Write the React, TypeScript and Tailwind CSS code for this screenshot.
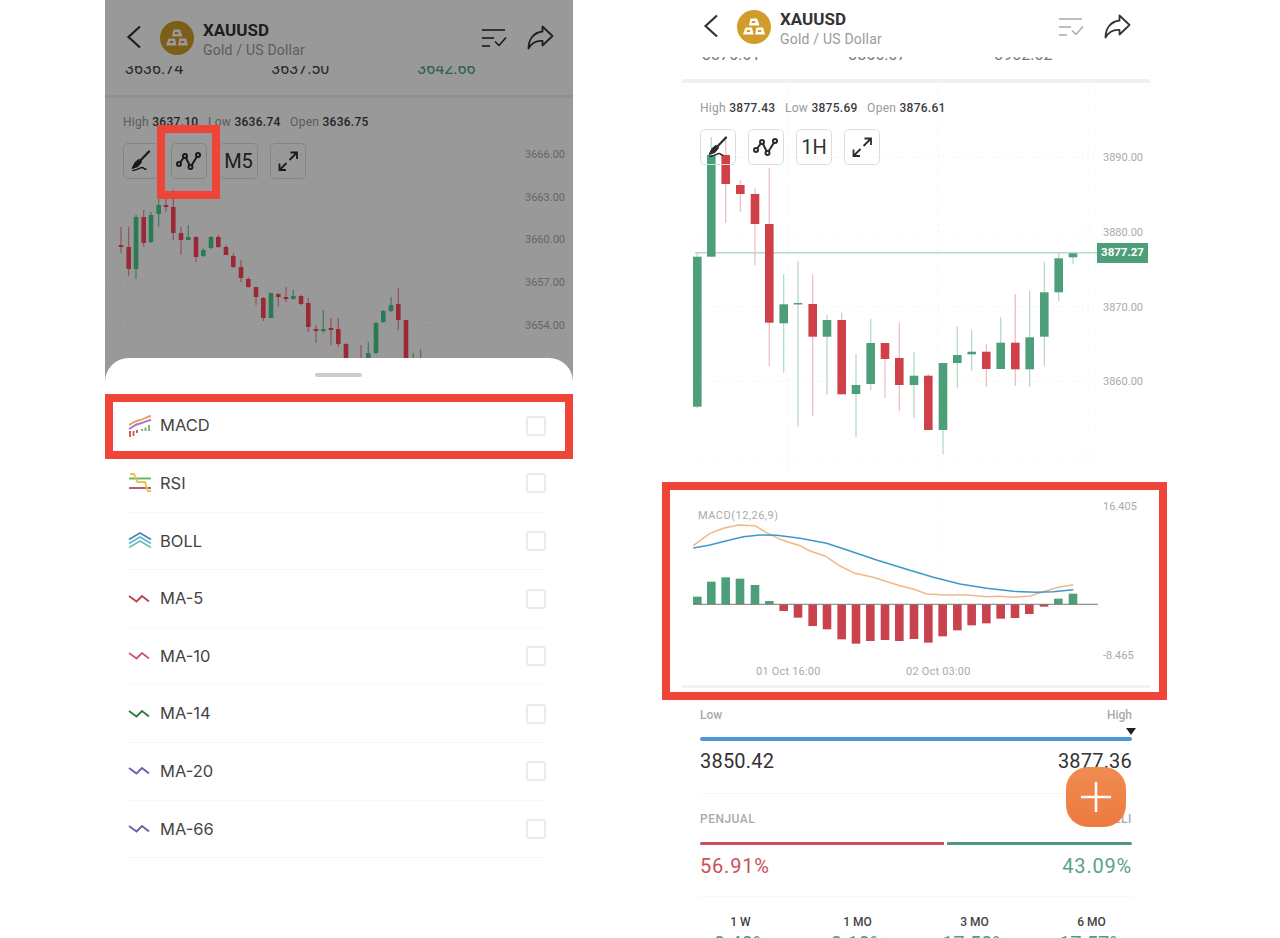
import React from "react";

const din = "font-['Roboto',sans-serif]";

type Candle = [number, number, number, number, number, "g" | "r"];

// x, wick top, wick bottom, body top, body bottom, colour (page coordinates)
const leftCandles: Candle[] = [
  [121, 227, 253, 245, 247, "r"], [128.7, 227, 276, 247, 269, "r"], [136, 215, 279, 217, 269, "g"],
  [143.7, 210, 247, 217, 243, "r"], [151, 212, 243, 215, 242, "g"], [158.7, 198, 227, 205, 214, "g"],
  [166, 198, 212, 205, 207, "r"], [173.3, 190, 240, 207, 233, "r"], [181, 227, 255, 233, 240, "r"],
  [188.3, 225, 240, 237, 240, "g"], [196, 236, 262, 237, 257, "r"], [203.3, 248, 257, 250, 256, "g"],
  [211, 236, 249, 237, 248, "g"], [218.3, 235, 248, 237, 247, "r"], [226, 245, 255, 247, 255, "r"],
  [233.3, 253, 268, 256, 267, "r"], [241, 260, 282, 267, 278, "r"], [248.3, 277, 288, 279, 287, "r"],
  [256, 287, 305, 287, 297, "r"], [263.3, 297, 321, 298, 318, "r"], [271, 293, 318, 293, 318, "g"],
  [278.3, 293, 307, 294, 297, "r"], [286, 287, 302, 297, 299, "r"], [293.3, 290, 300, 296, 299, "g"],
  [301, 295, 305, 296, 304, "r"], [308.3, 298, 332, 303, 327, "r"], [316, 325, 343, 329, 331, "r"],
  [323.3, 310, 333, 329, 331, "g"], [331, 318, 345, 328, 330, "r"], [338.3, 318, 347, 329, 344, "r"],
  [346, 343, 358, 344, 358, "r"], [361, 345, 358, 358, 358, "r"], [368.3, 342, 358, 353, 358, "g"],
  [376, 322, 354, 323, 353, "g"], [383.3, 310, 323, 311, 322, "g"], [391, 297, 312, 305, 311, "g"],
  [398.3, 288, 330, 304, 320, "r"], [406, 320, 358, 320, 358, "r"], [413.3, 353, 358, 358, 358, "g"],
  [420.7, 349, 358, 358, 358, "g"],
];

const rightCandles: Candle[] = [
  [697.3, 253, 408, 256.7, 406.7, "g"], [711.3, 137, 257, 155, 256.7, "g"], [725.7, 138, 223, 155, 184, "r"],
  [740.3, 180, 212, 185, 194, "r"], [755, 188, 265, 194, 224, "r"], [769.3, 168, 366, 224, 322.7, "r"],
  [783.7, 274, 372.7, 304.3, 323.3, "g"], [798, 260.7, 426.7, 303, 304, "g"], [812.7, 275, 415.7, 304, 336.7, "r"],
  [827, 315, 395, 320, 336.7, "g"], [841.7, 312.7, 394, 320, 394.3, "r"], [856, 354, 437, 385, 394, "g"],
  [870.7, 319, 390, 343, 384, "g"], [885, 343, 398, 343, 359, "r"], [899.3, 322.7, 411, 358, 385, "r"],
  [914, 352, 418, 375.7, 385, "g"], [928.3, 374, 430, 375.7, 430, "r"], [943, 363, 454, 363, 430, "g"],
  [957.3, 326, 388, 355, 363, "g"], [971.7, 330, 370.7, 351.7, 354.3, "g"], [986.3, 344, 386.7, 351.7, 369, "r"],
  [1000.7, 316.7, 369, 342.7, 369, "g"], [1015.3, 294, 385.7, 342.7, 369.3, "r"], [1029.7, 290.7, 386.7, 337.3, 369.3, "g"],
  [1044.3, 261.7, 366, 292.3, 336.7, "g"], [1058.7, 253, 301, 258.3, 292.3, "g"], [1073, 252.7, 264.3, 253.3, 257.3, "g"],
];

const Candles = ({ data, width, up, down, upWick, downWick }: { data: Candle[]; width: number; up: string; down: string; upWick: string; downWick: string }) => (
  <>
    {data.map(([x, wt, wb, bt, bb, c], i) => (
      <g key={i}>
        <line x1={x} x2={x} y1={wt} y2={wb} stroke={c === "g" ? upWick : downWick} strokeWidth={1.2} />
        <rect x={x - width / 2} y={bt} width={width} height={Math.max(bb - bt, 1.5)} fill={c === "g" ? up : down} />
      </g>
    ))}
  </>
);

const GoldLogo = ({ bg }: { bg: string }) => (
  <svg width="34" height="34" viewBox="0 0 34 34" className="shrink-0">
    <circle cx="17" cy="17" r="17" fill={bg} />
    <path d="M13.5 8.500H20L22.500 15.500H12Z M8.500 17.500H15L16.500 24.500H6Z M19.500 17.500H26L28 24.500H18Z" fill="#fff" />
    <path d="M15 11H18.500L18 13H14.500Z M10 20H13.500L13 22H9.500Z M21 20H24.500L24 22H20.500Z" fill={bg} />
  </svg>
);

const Header = ({ height, top, logo, listColor }: { height: string; top: string; logo: string; listColor: string }) => (
  <div className={`flex shrink-0 items-start bg-white pl-[21px] pr-[19px] ${height} ${top}`}>
    <svg width="16" height="24" viewBox="0 0 16 24" fill="none" stroke="#333" strokeWidth="2.2" className="mt-[4px]">
      <path d="M14 1.5 2.5 12 14 22.5" />
    </svg>
    <div className="ml-[18px]">
      <GoldLogo bg={logo} />
    </div>
    <div className={`-mt-px ml-[9px] flex flex-col ${din}`}>
      <span className="text-[17px] font-bold leading-[20px] text-[#333]">XAUUSD</span>
      <span className="text-[14px] leading-[20px] tracking-[0.2px] text-[#9a9a9a]">Gold / US Dollar</span>
    </div>
    <div className="ml-auto flex items-start">
      <svg width="26" height="22" viewBox="0 0 26 22" fill="none" stroke={listColor} strokeWidth="1.5" className="mt-[7px]">
        <path d="M1 2H24M1 10H13M1 18H9M14 13.5l4 4 7-8" />
      </svg>
      <svg width="27" height="25" viewBox="0 0 27 25" fill="none" stroke="#333" strokeWidth="1.8" strokeLinejoin="round" className="ml-[20px] mt-[4px]">
        <path d="M15.5 1.5 25.5 11 15.5 20.5V16C9.5 15.5 5 17.5 1.5 23.5 1.5 14.5 6.5 7.5 15.5 6.5Z" />
      </svg>
    </div>
  </div>
);

const ToolButton = ({ children, className = "" }: { children: React.ReactNode; className?: string }) => (
  <div className={`flex h-9 items-center justify-center rounded-[5px] border-[1.5px] border-[#ddd] ${className}`}>{children}</div>
);

const Toolbar = ({ label, labelWidth }: { label: string; labelWidth: string }) => (
  <div className="mt-[14px] flex gap-3">
    <ToolButton className="w-9">
      <svg width="24" height="24" viewBox="0 0 24 24" fill="none" stroke="#2b2b2b" strokeLinecap="round">
        <path d="M20 2.500 9 14" strokeWidth="2.200" />
        <path d="M9.500 10.500 6 13.500 3 19.500 9 17.500 12.500 13Z" fill="#2b2b2b" strokeWidth="1" />
        <path d="M4 21.500c4.500-.5 7-3 9.500-3 1.500 0 1 1.800 3.500 1.800" strokeWidth="1.500" />
      </svg>
    </ToolButton>
    <ToolButton className="w-9">
      <svg width="28" height="24" viewBox="0 0 28 24" fill="none" stroke="#2b2b2b" strokeWidth="2">
        <path d="M4 15 10 7 15.500 18 23 6" />
        <circle cx="4" cy="15" r="2" fill="#fff" />
        <circle cx="10" cy="7" r="2" fill="#fff" />
        <circle cx="15.500" cy="18" r="2" fill="#fff" />
        <circle cx="23" cy="6" r="2" fill="#fff" />
      </svg>
    </ToolButton>
    <ToolButton className={`${din} text-[20px] text-[#333] ${labelWidth}`}>{label}</ToolButton>
    <ToolButton className="w-9">
      <svg width="24" height="24" viewBox="0 0 24 24" fill="none" stroke="#2b2b2b" strokeWidth="1.8">
        <path d="M14.500 3.500H21V10M21 3.500 13.500 11M10.500 14 3.500 21M3.500 14.500V21H10" />
      </svg>
    </ToolButton>
  </div>
);

const Ohlc = ({ high, low, open }: { high: string; low: string; open: string }) => (
  <div className={`flex gap-[9.500px] text-[12px] leading-[14px] tracking-[0.28px] text-[#999] ${din}`}>
    {[["High", high], ["Low", low], ["Open", open]].map(([label, value]) => (
      <span key={label}>
        {label} <span className="font-medium text-[#3c3c3c]">{value}</span>
      </span>
    ))}
  </div>
);

const Wave = ({ color }: { color: string }) => (
  <svg width="22" height="10" viewBox="0 0 22 10" fill="none" stroke={color} strokeWidth="1.9">
    <path d="M1 2 8.500 7.500 14 2 21 7.500" />
  </svg>
);

const MacdIcon = () => (
  <svg width="24" height="24" viewBox="0 0 24 24" fill="none" strokeWidth="1.8">
    <path d="M1 11C5 9 7 6.500 12 6 16 5.500 18 2.500 23 2" stroke="#e8a05a" />
    <path d="M1 15C5 13 7 10 12 9.500 16 9 18 6.500 23 6" stroke="#a873c9" />
    <path d="M2 17v6M5.500 17v5M9 16v3" stroke="#c9605c" strokeWidth="2" />
    <path d="M14 15v2M17.500 13.500v3.500M21 11v6" stroke="#7cba6c" strokeWidth="2" />
  </svg>
);

const RsiIcon = () => (
  <svg width="24" height="20" viewBox="0 0 24 20" fill="none" strokeWidth="1.9">
    <path d="M1 5.500H23" stroke="#6fae6c" />
    <path d="M1 15H23" stroke="#b0566f" />
    <path d="M2 1H6L9.500 9H17L20 18H23" stroke="#eac24c" />
  </svg>
);

const BollIcon = () => (
  <svg width="24" height="17" viewBox="0 0 24 17" fill="none" strokeWidth="1.600">
    <path d="M1 7.500 12 1 23 7.500" stroke="#4d84a8" />
    <path d="M1 11.500 12 5 23 11.500" stroke="#62b1dc" />
    <path d="M1 15.500 12 9 23 15.500" stroke="#6cbcc0" />
  </svg>
);

const indicators: { name: string; icon: React.ReactNode }[] = [
  { name: "MACD", icon: <MacdIcon /> },
  { name: "RSI", icon: <RsiIcon /> },
  { name: "BOLL", icon: <BollIcon /> },
  { name: "MA-5", icon: <Wave color="#b5484f" /> },
  { name: "MA-10", icon: <Wave color="#c8588a" /> },
  { name: "MA-14", icon: <Wave color="#2f7d3a" /> },
  { name: "MA-20", icon: <Wave color="#6a5fb5" /> },
  { name: "MA-66", icon: <Wave color="#6a5fa8" /> },
];

const LeftPhone = () => (
  <div className="relative h-full w-[468px] shrink-0 overflow-hidden bg-white">
    <Header height="h-[66px]" top="pt-[21px]" logo="#d19d2a" listColor="#222" />
    <div className={`flex h-[29px] gap-[88px] overflow-hidden pl-5 text-[16px] leading-4 text-[#444] ${din}`}>
      <span className="-mt-[5px]">3636.74</span>
      <span className="-mt-[5px]">3637.50</span>
      <span className="-mt-[5px] text-[#4c9f78]">3642.66</span>
    </div>
    <div className="h-[3px] bg-[#f0f0f0]" />
    <div className="relative h-[400px] pl-[18px] pt-[17px]">
      <svg viewBox="105 98 468 400" className="absolute left-0 top-0 h-[400px] w-[468px]">
        <g stroke="#f2f2f2" strokeDasharray="2 3">
          {[154, 197, 239, 282, 325].map((y) => (
            <line key={y} x1="105" x2="520" y1={y} y2={y} />
          ))}
          {[128, 278, 427].map((x) => (
            <line key={x} x1={x} x2={x} y1="100" y2="358" />
          ))}
        </g>
        <Candles data={leftCandles} width={4.6} up="#46cc89" down="#ff4659" upWick="#6bcf9f" downWick="#f08a93" />
        <g className={`text-[11px] ${din}`} fill="#aaa">
          {["3666.00", "3663.00", "3660.00", "3657.00", "3654.00"].map((t, i) => (
            <text key={t} x="525" y={[158, 201, 243, 286, 329][i]}>{t}</text>
          ))}
        </g>
      </svg>
      <div className="relative">
        <Ohlc high="3637.10" low="3636.74" open="3636.75" />
        <Toolbar label="M5" labelWidth="w-[39px]" />
      </div>
    </div>
    <div className="absolute inset-0 bg-black/40" />
    <div className="absolute inset-x-0 bottom-0 top-[358px] rounded-t-[24px] bg-white pt-[39.500px]">
      <div className="absolute left-[210px] top-[15px] h-[4px] w-[47px] rounded-full bg-[#ccc]" />
      {indicators.map((item) => (
        <div key={item.name} className="ml-[22px] mr-[26px] flex h-[57.6px] items-center border-b border-[#f7f7f7] pr-[1px]">
          <div className="flex w-[33px] items-center pl-px">{item.icon}</div>
          <span className="font-['Inter',sans-serif] text-[16.5px] text-[#444]">{item.name}</span>
          <div className="ml-auto h-5 w-5 rounded-[3px] border-2 border-[#ebebeb]" />
        </div>
      ))}
    </div>
    <div className="absolute left-[52px] top-[125px] h-[74px] w-[63px] border-[8px] border-[#ef4438]" />
    <div className="absolute inset-x-0 top-[394px] h-[65px] border-[8px] border-[#ef4438]" />
  </div>
);

const histogram: [number, number][] = [
  [112, 350], [154, 305], [197, 292], [240, 296], [285, 315], [328, 363], [371, 393], [414, 413], [458, 438],
  [501, 448], [545, 478], [588, 491], [631, 483], [675, 480], [718, 483], [762, 477], [805, 488], [848, 469],
  [892, 451], [935, 436], [979, 430], [1022, 416], [1065, 414], [1108, 402], [1152, 380], [1195, 356], [1239, 341],
];

const toPoints = (pts: number[][]) => pts.map(([x, y]) => `${660 + x / 3},${480 + y / 3}`).join(" ");

const bluePts = [
  [100, 204], [150, 195], [200, 182], [250, 170], [300, 165], [350, 166], [420, 175], [500, 190], [570, 213],
  [650, 240], [740, 268], [820, 292], [900, 312], [980, 325], [1060, 334], [1130, 337], [1180, 335], [1240, 329],
];
const orangePts = [
  [100, 197], [125, 178], [150, 160], [190, 145], [235, 135], [285, 137], [320, 158], [360, 178], [420, 197],
  [450, 213], [495, 228], [540, 258], [585, 280], [640, 292], [720, 317], [760, 327], [800, 342], [860, 345],
  [920, 345], [980, 350], [1020, 349], [1060, 352], [1110, 348], [1150, 335], [1195, 322], [1240, 314],
];

const MacdChart = () => (
  <svg viewBox="682 490 468 195" className="block h-[195px] w-[468px]">
    <g stroke="#f5f5f5" strokeDasharray="2 3">
      <line x1="938" x2="938" y1="490" y2="680" />
      <line x1="1088" x2="1088" y1="490" y2="680" />
    </g>
    {histogram.map(([x, y]) => {
      const zero = 604.3;
      const end = 480 + y / 3;
      return (
        <rect
          key={x}
          x={660 + x / 3 - 4.3}
          y={Math.min(zero, end)}
          width={8.6}
          height={Math.abs(end - zero)}
          fill={end < zero ? "#4c9f78" : "#c9434f"}
        />
      );
    })}
    <line x1="693" x2="1098" y1="604.3" y2="604.3" stroke="#777" />
    <polyline points={toPoints(orangePts)} fill="none" stroke="#eeb98a" strokeWidth="1.5" />
    <polyline points={toPoints(bluePts)} fill="none" stroke="#3d97cf" strokeWidth="1.5" />
    <g className={`text-[11px] ${din}`} fill="#aaa">
      <text x="698" y="519" className="tracking-[0.5px]">MACD(12,26,9)</text>
      <text x="1103" y="510">16.405</text>
      <text x="1103" y="659">-8.465</text>
      <text x="756" y="675" className="tracking-[0.2px]">01 Oct 16:00</text>
      <text x="906" y="675" className="tracking-[0.2px]">02 Oct 03:00</text>
    </g>
  </svg>
);

const periods = [
  { label: "1 W", value: "0.40%" },
  { label: "1 MO", value: "0.10%" },
  { label: "3 MO", value: "17.50%" },
  { label: "6 MO", value: "17.57%" },
];

const RightPhone = () => (
  <div className="relative h-full w-[468px] shrink-0">
    <Header height="h-[57px]" top="pt-[10px]" logo="#d19d2a" listColor="#aaa" />
    <div className={`flex h-[22px] gap-[88px] overflow-hidden pl-5 text-[16px] leading-4 text-[#777] ${din}`}>
      <span className="-mt-[10px]">3876.61</span>
      <span className="-mt-[10px]">3866.07</span>
      <span className="-mt-[10px]">3902.02</span>
    </div>
    <div className="h-[4px] bg-[#f0f0f0]" />
    <div className="relative h-[407px] pl-[18px] pt-[18px]">
      <svg viewBox="682 83 468 407" className="absolute left-0 top-0 h-[407px] w-[468px]">
        <g stroke="#f2f2f2" strokeDasharray="2 3">
          {[157, 232, 307, 381, 456].map((y) => (
            <line key={y} x1="692" x2="1096" y1={y} y2={y} />
          ))}
          {[787, 938, 1088].map((x) => (
            <line key={x} x1={x} x2={x} y1="84" y2="470" />
          ))}
        </g>
        <line x1="695" x2="1097" y1="252.700" y2="252.700" stroke="#bcd8cc" strokeWidth="1.500" />
        <Candles data={rightCandles} width={8.6} up="#4c9f78" down="#cf4048" upWick="#b5d6c7" downWick="#ecbcbf" />
        <g className={`text-[11px] ${din}`} fill="#aaa">
          {["3890.00", "3880.00", "3870.00", "3860.00"].map((t, i) => (
            <text key={t} x="1103" y={[161, 236, 311, 385][i]}>{t}</text>
          ))}
        </g>
      </svg>
      <div className={`absolute left-[415px] top-[160px] flex h-5 w-[51px] items-center justify-center bg-[#4c9f78] text-[11.5px] font-bold text-white ${din}`}>
        3877.27
      </div>
      <div className="relative">
        <Ohlc high="3877.43" low="3875.69" open="3876.61" />
        <Toolbar label="1H" labelWidth="w-9" />
      </div>
    </div>
    <MacdChart />
    <div className="h-[3px] bg-[#f0f4f2]" />
    <div className={`px-[18px] pt-5 ${din}`}>
      <div className="flex justify-between text-[12px] font-medium leading-[14px] text-[#aaa]">
        <span>Low</span>
        <span>High</span>
      </div>
      <div className="-mr-[4px] mt-[6px] flex justify-end">
        <div className="h-0 w-0 border-x-[5.5px] border-t-[7px] border-x-transparent border-t-[#222]" />
      </div>
      <div className="mt-[2px] h-[3.500px] rounded-full bg-[#4c97d8]" />
      <div className="mt-2 flex justify-between text-[20px] leading-6 tracking-[0.2px] text-[#333]">
        <span>3850.42</span>
        <span>3877.36</span>
      </div>
      <div className="mt-5 h-px bg-[#f7f7f7]" />
      <div className="mt-[18px] flex justify-between text-[12px] font-medium leading-[14px] tracking-[0.5px] text-[#aaa]">
        <span>PENJUAL</span>
        <span>BELI</span>
      </div>
      <div className="mt-4 flex h-[3.500px] gap-[3px]">
        <div className="h-full w-[244px] rounded-l-full bg-[#c9505a]" />
        <div className="h-full flex-1 rounded-r-full bg-[#4f9a7c]" />
      </div>
      <div className="mt-[9px] flex justify-between text-[20px] leading-6 tracking-[0.8px]">
        <span className="text-[#c9505a]">56.91%</span>
        <span className="text-[#5aa386]">43.09%</span>
      </div>
      <div className="mt-[18px] h-px bg-[#f7f7f7]" />
      <div className="-mx-[18px] mt-[18px] grid grid-cols-4 text-center">
        {periods.map((p) => (
          <div key={p.label} className="flex flex-col">
            <span className="text-[12px] font-medium leading-[14px] text-[#444]">{p.label}</span>
            <span className="mt-[3px] text-[20px] leading-6 text-[#4c9f78]">{p.value}</span>
          </div>
        ))}
      </div>
    </div>
    <div className="absolute left-[384px] top-[767px] flex h-[60px] w-[60px] items-center justify-center rounded-[22px] bg-gradient-to-b from-[#f08c50] to-[#ec7a40]">
      <svg width="32" height="32" viewBox="0 0 32 32" stroke="#fff" strokeWidth="2.500">
        <path d="M16 1V31M1 16H31" />
      </svg>
    </div>
    <div className="absolute -left-5 top-[482px] h-[218px] w-[505px] border-[8px] border-[#ef4438]" />
  </div>
);

export default function App() {
  return (
    <div className="flex h-[938px] w-[1280px] gap-[109px] overflow-hidden bg-white pl-[105px]">
      <LeftPhone />
      <RightPhone />
    </div>
  );
}
